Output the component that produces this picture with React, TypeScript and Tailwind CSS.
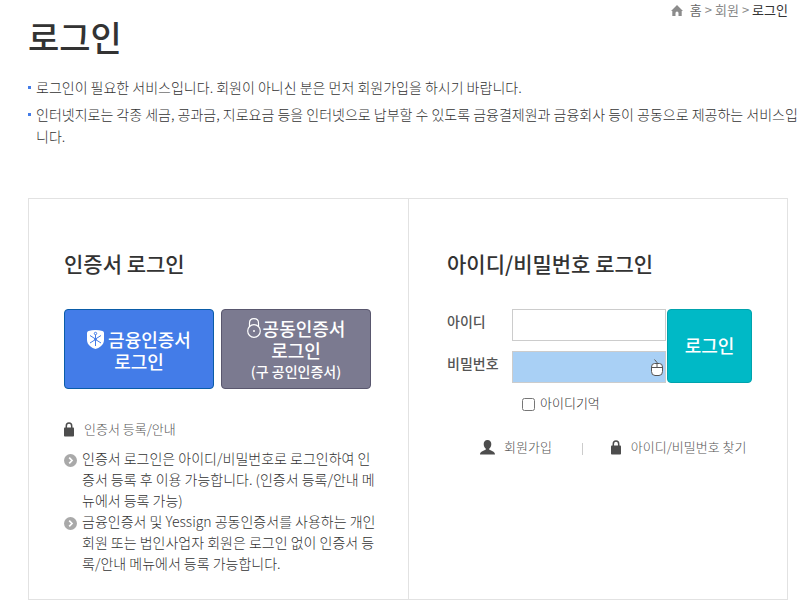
import type { ReactNode } from "react";

const HomeIcon = (): ReactNode => (
  <svg className="h-[11px] w-3" viewBox="0 0 12 11" fill="#8c8c8c" aria-hidden="true">
    <path d="M6 0 12 6H10.700V11H7.500V8Q7.500 6.500 6 6.500T4.500 8V11H1.300V6H0Z" />
  </svg>
);

const LockIcon = (): ReactNode => (
  <svg className="h-[15px] w-[10px] shrink-0" viewBox="0 0 10 15" aria-hidden="true">
    <path d="M2.300 7V4Q2.300 1 5 1T7.700 4V7" fill="none" stroke="#4d4d4d" strokeWidth="1.500" />
    <rect y="5.500" width="10" height="9" rx=".8" fill="#4d4d4d" />
  </svg>
);

const UserIcon = (): ReactNode => (
  <svg className="h-[15px] w-[15px] shrink-0" viewBox="0 0 15 15" fill="#4d4d4d" aria-hidden="true">
    <path d="M7.500 0C5 0 3.700 1.700 3.700 4c0 2 .8 3.600 2 4.500v1.200C4.500 10.500 0 11 0 14.500h15c0-3.500-4.500-4-5.700-4.800V8.500c1.200-.9 2-2.500 2-4.500C11.300 1.700 10 0 7.500 0Z" />
  </svg>
);

const ShieldIcon = (): ReactNode => (
  <svg className="h-[19px] w-[17px] shrink-0" viewBox="0 0 17 19" aria-hidden="true">
    <path d="M1.500 1Q8.500-1 15.500 1 17 1.500 17 3V10C17 15 12 18 8.500 19 5 18 0 15 0 10V3Q0 1.500 1.500 1Z" fill="#fff" />
    <g fill="none" stroke="#437ce8" strokeWidth="1">
      <circle cx="8.500" cy="3.500" r="1.200" />
      <path d="M8.500 4.700V16M3 5.500 8.500 9 14 5.500M3 13 8.500 9.500 14 13" />
    </g>
    <circle cx="8.500" cy="9.200" r="1.300" fill="#437ce8" />
  </svg>
);

const RoundLockIcon = (): ReactNode => (
  <svg className="h-5 w-[14px] shrink-0" viewBox="0 0 14 20" fill="none" stroke="#fff" strokeWidth="1.200" aria-hidden="true">
    <circle cx="7" cy="13" r="6.300" />
    <path d="M2.500 8.500V5Q2.500 .7 7 .7T11.500 5V8.500" />
    <circle cx="7" cy="13" r="1" fill="#fff" stroke="none" />
  </svg>
);

const ArrowIcon = (): ReactNode => (
  <svg className="mt-[6px] h-[13px] w-[13px] shrink-0" viewBox="0 0 13 13" aria-hidden="true">
    <circle cx="6.500" cy="6.500" r="6.500" fill="#a9a9a9" />
    <path d="M5.200 3.700 8 6.500 5.200 9.300" fill="none" stroke="#fff" strokeWidth="1.700" />
  </svg>
);

const MouseIcon = (): ReactNode => (
  <svg className="h-[18px] w-3" viewBox="0 0 12 18" fill="none" stroke="#555" aria-hidden="true">
    <path d="M3.500 4.500H8.500Q11.500 4.500 11.500 8V12.500Q11.500 16.500 8 16.500H4Q.5 16.500 .5 12.500V8Q.5 4.500 3.500 4.500Z" fill="#fff" />
    <path d="M.5 8.500H11.500M6 8.500V3.500L3.500 .5" />
  </svg>
);

const notices = [
  ["로그인이 필요한 서비스입니다. 회원이 아니신 분은 먼저 회원가입을 하시기 바랍니다."],
  [
    "인터넷지로는 각종 세금, 공과금, 지로요금 등을 인터넷으로 납부할 수 있도록 금융결제원과 금융회사 등이 공동으로 제공하는 서비스입",
    "니다.",
  ],
];

const guides = [
  ["인증서 로그인은 아이디/비밀번호로 로그인하여 인", "증서 등록 후 이용 가능합니다. (인증서 등록/안내 메", "뉴에서 등록 가능)"],
  ["금융인증서 및 Yessign 공동인증서를 사용하는 개인", "회원 또는 법인사업자 회원은 로그인 없이 인증서 등", "록/안내 메뉴에서 등록 가능합니다."],
];

const App = (): ReactNode => {
  return (
    <div className="bg-white pr-3 pl-7 font-['Noto_Sans_CJK_KR',sans-serif] text-[#333]">
      <header className="flex items-start justify-between">
        <h1 className="pt-[13px] text-[34px] leading-[48px] font-medium text-[#333]">로그인</h1>
        <nav aria-label="breadcrumb" className="flex items-center gap-[3px] text-[13px] leading-5 text-[#888]">
          <HomeIcon />
          <a href="#home" className="ml-1 text-[#666]">홈</a>
          <span>&gt;</span>
          <a href="#member">회원</a>
          <span>&gt;</span>
          <a href="#login" aria-current="page" className="text-[#333]">로그인</a>
        </nav>
      </header>

      <ul className="mt-[15px] space-y-[5px] text-sm leading-[22px] font-light">
        {notices.map((lines) => (
          <li key={lines[0]} className="flex gap-[5px]">
            <span className="mt-[10px] h-[3px] w-[3px] shrink-0 bg-[#437ce8]" />
            <p>
              {lines.map((line) => (
                <span key={line} className="block whitespace-nowrap">{line}</span>
              ))}
            </p>
          </li>
        ))}
      </ul>

      <main className="mt-[51px] grid grid-cols-2 border border-[#e2e2e2]">
        <section className="pt-12 pr-[37px] pb-[25px] pl-[35px]">
          <h2 className="text-[21px] leading-8 font-medium text-[#333]">인증서 로그인</h2>
          <div className="mt-[30px] flex gap-[7px] text-lg leading-[22px] font-medium text-white">
            <button type="button" className="flex h-20 flex-1 flex-col items-center justify-center rounded border border-[#0a5ca8] bg-[#437ce8] pt-[2px]">
              <span className="flex items-center gap-1"><ShieldIcon />금융인증서</span>
              <span>로그인</span>
            </button>
            <button type="button" className="flex h-20 flex-1 flex-col items-center justify-center rounded border border-[#59576e] bg-[#7b7a90]">
              <span className="flex items-center gap-[2px]"><RoundLockIcon />공동인증서</span>
              <span>로그인</span>
              <span className="text-sm leading-5">(구 공인인증서)</span>
            </button>
          </div>
          <a href="#certificate" className="mt-[30px] flex items-center gap-[10px] text-[13px] leading-5 font-light text-[#555]">
            <LockIcon />
            인증서 등록/안내
          </a>
          <ul className="mt-[9px] text-sm leading-[21px] font-light">
            {guides.map((lines) => (
              <li key={lines[0]} className="flex gap-[5px]">
                <ArrowIcon />
                <p>
                  {lines.map((line) => (
                    <span key={line} className="block whitespace-nowrap">{line}</span>
                  ))}
                </p>
              </li>
            ))}
          </ul>
        </section>

        <section className="border-l border-[#e2e2e2] pt-12 pr-[35px] pl-[38px]">
          <h2 className="text-[21px] leading-8 font-medium text-[#333]">아이디/비밀번호 로그인</h2>
          <form className="mt-[30px]" onSubmit={(event) => event.preventDefault()}>
            <div className="flex gap-px">
              <div className="flex-1 space-y-[10px]">
                <div className="flex items-center">
                  <label htmlFor="user-id" className="w-[65px] shrink-0 pb-2 text-sm font-medium text-[#555]">아이디</label>
                  <input id="user-id" type="text" className="h-8 w-full min-w-0 border border-[#ccc] px-2 text-sm outline-none" />
                </div>
                <div className="flex items-center">
                  <label htmlFor="password" className="w-[65px] shrink-0 pb-2 text-sm font-medium text-[#555]">비밀번호</label>
                  <div className="relative min-w-0 flex-1">
                    <input id="password" type="password" className="block h-8 w-full border border-[#ccc] bg-[#a9d0f5] pr-5 pl-2 text-sm outline-none" />
                    <button type="button" aria-label="마우스 입력" className="absolute top-2 right-[3px] block">
                      <MouseIcon />
                    </button>
                  </div>
                </div>
              </div>
              <button type="submit" className="w-[85px] rounded border border-[#00a3ad] bg-[#00b9c6] pb-[2px] text-lg font-medium text-white">로그인</button>
            </div>
            <div className="mt-[10px] ml-[75px] flex items-center gap-[5px] text-[13px] leading-5 font-light">
              <input id="remember" type="checkbox" className="mt-[2px] h-[13px] w-[13px]" />
              <label htmlFor="remember">아이디기억</label>
            </div>
          </form>
          <div className="mt-6 flex items-center pl-[33px] text-[13px] leading-5 font-light whitespace-nowrap text-[#555]">
            <a href="#join" className="flex items-center gap-[9px]"><UserIcon />회원가입</a>
            <span className="mt-1 mr-7 ml-[30px] h-3 w-px bg-[#ccc]" />
            <a href="#find" className="flex items-center gap-[10px]"><LockIcon />아이디/비밀번호 찾기</a>
          </div>
        </section>
      </main>
    </div>
  );
};

export default App;
